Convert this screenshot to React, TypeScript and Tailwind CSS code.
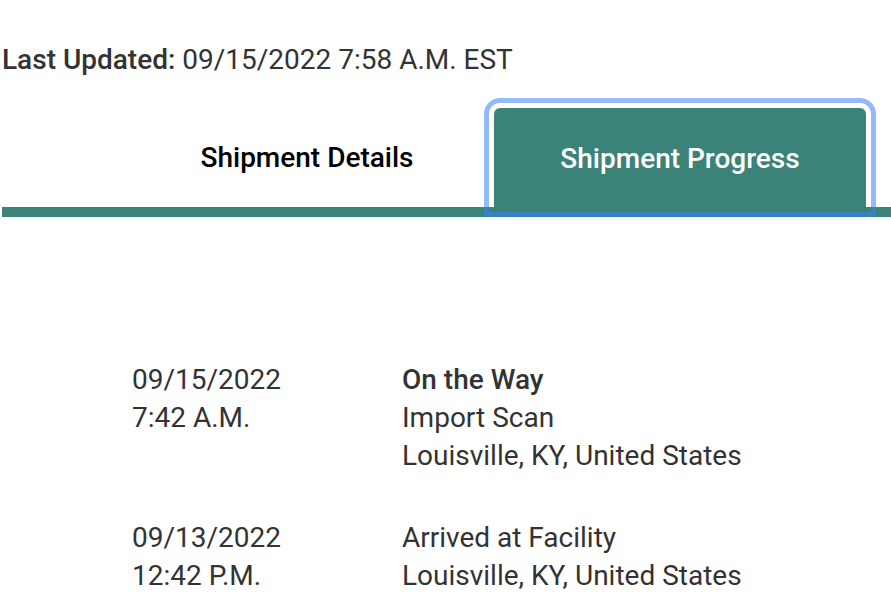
const events = [
    {
        date: '09/15/2022',
        time: '7:42 A.M.',
        status: 'On the Way',
        detail: 'Import Scan',
        location: 'Louisville, KY, United States',
    },
    {
        date: '09/13/2022',
        time: '12:42 P.M.',
        status: '',
        detail: 'Arrived at Facility',
        location: 'Louisville, KY, United States',
    },
]

export default function App() {
    return (
        <div className="min-h-screen bg-white font-['Roboto',sans-serif] text-[#333333] overflow-hidden">
            <div className="pt-[41px] pl-[2px] text-[28px] leading-[38px]">
                <span className="font-medium">Last Updated:</span> 09/15/2022 7:58 A.M. EST
            </div>

            <div className="mt-[29px] ml-[2px] flex border-b-[10px] border-[#3b8379] pl-[119px]">
                <button className="w-[372px] h-[99px] text-[28px] font-medium text-black">
                    Shipment Details
                </button>
                <button className="ml-[1px] w-[372px] h-[99px] pt-[2px] rounded-t-md bg-[#3b8379] text-[28px] font-medium text-white outline-[5px] outline-solid outline-offset-[5px] outline-[#3b82f68c]">
                    Shipment Progress
                </button>
            </div>

            <div className="mt-[144px] pl-[132px] flex flex-col gap-[44px] text-[28px] leading-[38px]">
                {events.map((e, i) => (
                    <div key={i} className="grid grid-cols-[270px_1fr]">
                        <div>
                            <div>{e.date}</div>
                            <div>{e.time}</div>
                        </div>
                        <div>
                            {e.status && <div className="font-medium">{e.status}</div>}
                            <div>{e.detail}</div>
                            <div>{e.location}</div>
                        </div>
                    </div>
                ))}
            </div>
        </div>
    )
}
